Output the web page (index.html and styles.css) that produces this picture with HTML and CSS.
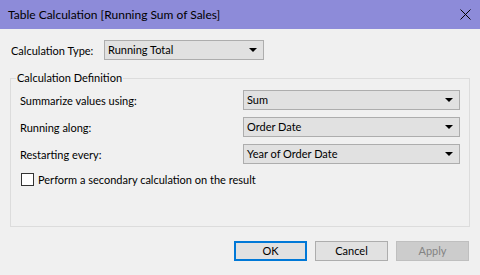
FILE: index.html
```html
<!DOCTYPE html>
<html lang="en">
<head>
  <meta charset="UTF-8" />
  <title>Table Calculation</title>
  <link rel="stylesheet" href="styles.css">
</head>
<body>
  <div class="dialog">
    <div class="titlebar">
      <span>Table Calculation [Running Sum of Sales]</span>
      <svg class="close" width="11" height="11" viewBox="0 0 11 11"><path d="M0.5 0.5 L10.5 10.5 M10.5 0.5 L0.5 10.5" stroke="#000" stroke-width="1" fill="none"/></svg>
    </div>

    <div class="body">
      <div class="type-row">
        <span class="type-label">Calculation Type:</span>
        <div class="select type-select"><span>Running Total</span><i class="arrow"></i></div>
      </div>

      <fieldset class="group">
        <legend>Calculation Definition</legend>
        <div class="row">
          <span>Summarize values using:</span>
          <div class="select"><span>Sum</span><i class="arrow"></i></div>
        </div>
        <div class="row">
          <span>Running along:</span>
          <div class="select"><span>Order Date</span><i class="arrow"></i></div>
        </div>
        <div class="row">
          <span>Restarting every:</span>
          <div class="select"><span>Year of Order Date</span><i class="arrow"></i></div>
        </div>
        <label class="check"><span class="box"></span>Perform a secondary calculation on the result</label>
      </fieldset>

      <div class="buttons">
        <button class="btn default">OK</button>
        <button class="btn">Cancel</button>
        <button class="btn" disabled>Apply</button>
      </div>
    </div>
  </div>
</body>
</html>
```

FILE: styles.css
```css
* { box-sizing: border-box; }
body { margin: 0; font-family: Lato, "Noto Sans", sans-serif; font-size: 11px; color: #000; background: #f0f0f0; }
.dialog { width: 480px; height: 275px; background: #f0f0f0; }
.titlebar { height: 29px; background: #8d8bd9; display: flex; align-items: center; justify-content: space-between; padding: 0 9px 1px 8px; font-size: 12px; }
.close { display: block; }
.body { padding: 11px 10px 0 10px; }
.type-row { display: flex; align-items: center; height: 20px; }
.type-label { width: 94px; flex-shrink: 0; white-space: nowrap; padding-left: 1px; }
.select { height: 20px; border: 1px solid #adadad; background: #e1e1e1; display: flex; align-items: center; justify-content: space-between; padding: 0 6px 0 3px; line-height: 16px; white-space: nowrap; }
.type-select { width: 160px; }
.arrow { width: 0; height: 0; border-left: 4px solid transparent; border-right: 4px solid transparent; border-top: 4px solid #000; }
.group { margin: 10px 0 0 0; padding: 4px 9px 0 9px; border: 1px solid #dcdcdc; height: 157px; }
.group legend { padding: 0 1px; margin-left: -4px; line-height: 16px; }
.row { display: flex; align-items: center; justify-content: space-between; height: 20px; margin-bottom: 7px; }
.row .select { width: 217px; }
.check { display: flex; align-items: center; height: 16px; margin-top: 2px; }
.check .box { width: 13px; height: 13px; border: 1px solid #333; background: #fff; margin: 0 4px 0 1px; }
.buttons { display: flex; justify-content: flex-end; gap: 8px; margin-top: 14px; padding-right: 1px; }
.btn { width: 73px; height: 20px; font: inherit; line-height: 16px; border: 1px solid #adadad; background: #e1e1e1; color: #000; padding: 0; }
.btn.default { border: 2px solid #0078d7; }
.btn:disabled { background: #cccccc; border-color: #bfbfbf; color: #838383; }
```
